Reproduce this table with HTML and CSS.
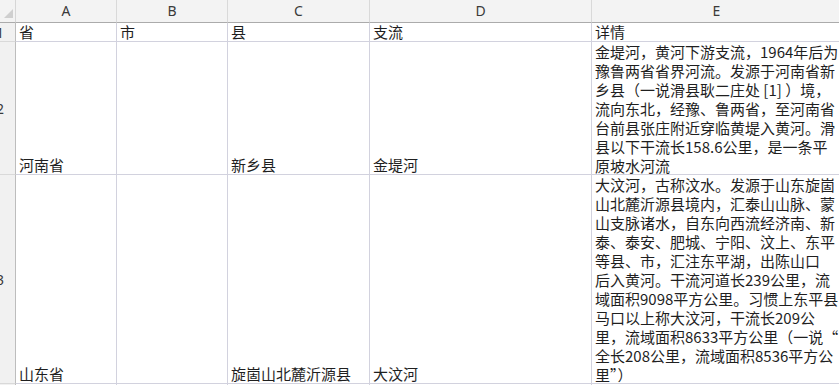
FILE: index.html
```html
<!DOCTYPE html>
<html lang="zh">
<head>
<meta charset="utf-8">
<title>Sheet</title>
<link rel="stylesheet" href="styles.css">
</head>
<body>
<div class="sheet">
  <div class="corner"><span class="tri"></span></div>
  <div class="ch">A</div>
  <div class="ch">B</div>
  <div class="ch">C</div>
  <div class="ch">D</div>
  <div class="ch last">E</div>

  <div class="rh"><span>1</span></div>
  <div class="c">省</div>
  <div class="c">市</div>
  <div class="c">县</div>
  <div class="c">支流</div>
  <div class="c last">详情</div>

  <div class="rh"><span>2</span></div>
  <div class="c">河南省</div>
  <div class="c"></div>
  <div class="c">新乡县</div>
  <div class="c">金堤河</div>
  <div class="c last wrap">
    <div>金堤河，黄河下游支流，1964年后为</div>
    <div>豫鲁两省省界河流。发源于河南省新</div>
    <div>乡县（一说滑县耿二庄处 [1] ）境，</div>
    <div>流向东北，经豫、鲁两省，至河南省</div>
    <div>台前县张庄附近穿临黄堤入黄河。滑</div>
    <div>县以下干流长158.6公里，是一条平</div>
    <div>原坡水河流</div>
  </div>

  <div class="rh"><span>3</span></div>
  <div class="c">山东省</div>
  <div class="c"></div>
  <div class="c">旋崮山北麓沂源县</div>
  <div class="c">大汶河</div>
  <div class="c last wrap">
    <div>大汶河，古称汶水。发源于山东旋崮</div>
    <div>山北麓沂源县境内，汇泰山山脉、蒙</div>
    <div>山支脉诸水，自东向西流经济南、新</div>
    <div>泰、泰安、肥城、宁阳、汶上、东平</div>
    <div>等县、市，汇注东平湖，出陈山口</div>
    <div>后入黄河。干流河道长239公里，流</div>
    <div>域面积9098平方公里。习惯上东平县</div>
    <div>马口以上称大汶河，干流长209公</div>
    <div>里，流域面积8633平方公里（一说“</div>
    <div>全长208公里，流域面积8536平方公</div>
    <div>里”）</div>
  </div>

  <div class="rh"></div>
  <div class="c"></div>
  <div class="c"></div>
  <div class="c"></div>
  <div class="c"></div>
  <div class="c last"></div>
</div>
</body>
</html>
```

FILE: styles.css
```css
html, body {
  margin: 0;
  padding: 0;
  background: #ffffff;
  overflow: hidden;
}

.sheet {
  display: grid;
  grid-template-columns: 16px 101px 111px 142px 222px 250px;
  grid-template-rows: 23px 19px 133px 209px 20px;
  width: 842px;
  font-family: "Noto Sans CJK SC", "Noto Sans", sans-serif;
  font-size: 15px;
  line-height: 19px;
  color: #1f1f1f;
}

.sheet > div {
  box-sizing: border-box;
}

.corner {
  background: #f3f3f3;
  border-right: 1px solid #d6d6d6;
  border-bottom: 1px solid #ababab;
  position: relative;
}

.tri {
  position: absolute;
  right: 2px;
  bottom: 4px;
  width: 0;
  height: 0;
  border-left: 9px solid transparent;
  border-bottom: 9px solid #cfcfcf;
}

.ch {
  background: #f3f3f3;
  border-right: 1px solid #d9d9d9;
  border-bottom: 1px solid #ababab;
  font-family: "Noto Sans", "Liberation Sans", sans-serif;
  font-size: 14px;
  color: #3a3a3a;
  display: flex;
  align-items: center;
  justify-content: center;
  padding-bottom: 1px;
}

.rh {
  background: #f1f1f1;
  border-right: 1px solid #bdbdbd;
  border-bottom: 1px solid #d9d9d9;
  font-family: "Noto Sans", "Liberation Sans", sans-serif;
  font-size: 14px;
  color: #3a3a3a;
  display: flex;
  align-items: center;
  justify-content: flex-end;
  overflow: hidden;
}

.rh span {
  margin-right: 11px;
}

.c {
  border-right: 1px solid #d2d2de;
  border-bottom: 1px solid #d2d2de;
  padding-left: 3px;
  display: flex;
  align-items: flex-end;
  white-space: nowrap;
}

.c.wrap {
  flex-direction: column;
  align-items: flex-start;
  justify-content: flex-start;
}
```
